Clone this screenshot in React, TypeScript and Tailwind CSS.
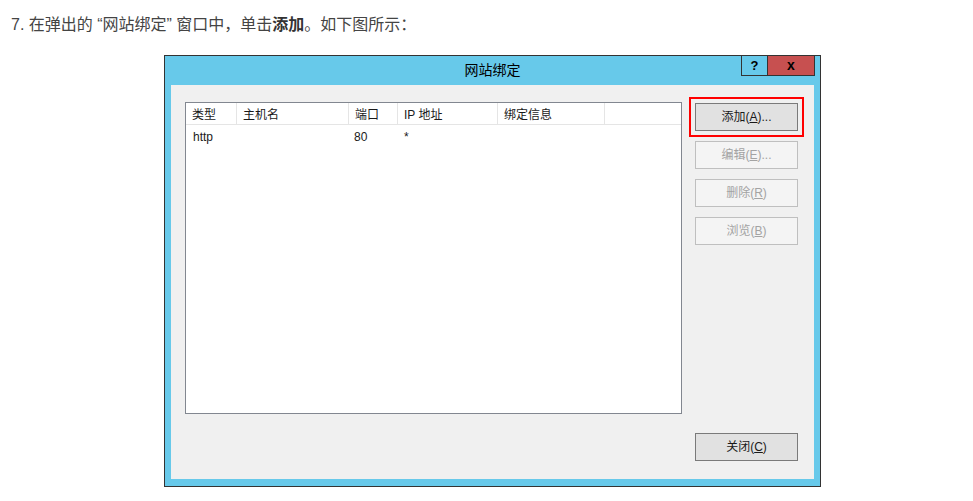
import React from "react";

const cjk = { fontFamily: '"Liberation Sans", "Noto Sans CJK SC", sans-serif' };

const cols = [
  { label: "类型", w: "w-[51px]" },
  { label: "主机名", w: "w-[112px]" },
  { label: "端口", w: "w-[49px]" },
  { label: "IP 地址", w: "w-[100px]" },
  { label: "绑定信息", w: "w-[107px]" },
];

function SideButton({ label, k, suffix = "", disabled = false }: { label: string; k: string; suffix?: string; disabled?: boolean }) {
  return (
    <button
      className={
        "w-[103px] h-[28px] border text-[12px] flex items-center justify-center " +
        (disabled ? "bg-[#f4f4f4] border-[#bfbfbf] text-[#a3a3a3]" : "bg-[#e1e1e1] border-[#7a7a7a] text-[#1a1a1a]")
      }
    >
      {label}(<span className="underline">{k}</span>){suffix}
    </button>
  );
}

export default function App() {
  return (
    <div className="w-[973px] h-[501px] bg-white overflow-hidden" style={cjk}>
      <p className="pl-[11px] pt-[15px] text-[16px] leading-[20px] text-[#444]">
        7. 在弹出的 “网站绑定” 窗口中，单击<b className="text-[#333]">添加</b>。如下图所示：
      </p>

      <div className="ml-[164px] mt-[20px] w-[657px] h-[432px] border border-[#333] bg-[#67c9ea] flex flex-col">
        {/* title bar */}
        <div className="h-[29px] flex items-start relative">
          <div className="flex-1 text-center text-[14px] leading-[29px] text-black">网站绑定</div>
          <div className="absolute right-[5px] top-[-1px] flex">
            <div className="w-[27px] h-[21px] border border-[#333] flex items-center justify-center text-[13px] font-bold text-black">?</div>
            <div className="w-[47px] h-[21px] border border-l-0 border-[#333] bg-[#c75050] flex items-center justify-center text-[14px] font-bold text-black">x</div>
          </div>
        </div>

        {/* content */}
        <div className="mx-[6px] mb-[7px] flex-1 bg-[#f0f0f0] flex">
          <div className="ml-[14px] mt-[17px] w-[497px] h-[312px] border border-[#828790] bg-white">
            <div className="flex h-[22px] border-b border-[#e5e5e5]">
              {cols.map((c) => (
                <div key={c.label} className={c.w + " border-r border-[#e5e5e5] text-[12px] leading-[21px] pt-[2px] pl-[6px] text-[#1a1a1a]"}>
                  {c.label}
                </div>
              ))}
            </div>
            <div className="flex h-[20px] pt-[2px] text-[12px] leading-[20px] text-[#1a1a1a]">
              <div className="w-[163px] pl-[7px]">http</div>
              <div className="w-[49px] pl-[5px]">80</div>
              <div className="w-[100px] pl-[6px]">*</div>
            </div>
          </div>

          <div className="ml-[13px] mt-[18px] flex flex-col w-[103px]">
            <div className="relative">
              <div className="absolute -left-[6px] -top-[6px] w-[115px] h-[40px] border-2 border-[#ff0000]" />
              <SideButton label="添加" k="A" suffix="..." />
            </div>
            <div className="mt-[10px]"><SideButton label="编辑" k="E" suffix="..." disabled /></div>
            <div className="mt-[10px]"><SideButton label="删除" k="R" disabled /></div>
            <div className="mt-[10px]"><SideButton label="浏览" k="B" disabled /></div>
            <div className="mt-[188px]"><SideButton label="关闭" k="C" /></div>
          </div>
        </div>
      </div>
    </div>
  );
}
